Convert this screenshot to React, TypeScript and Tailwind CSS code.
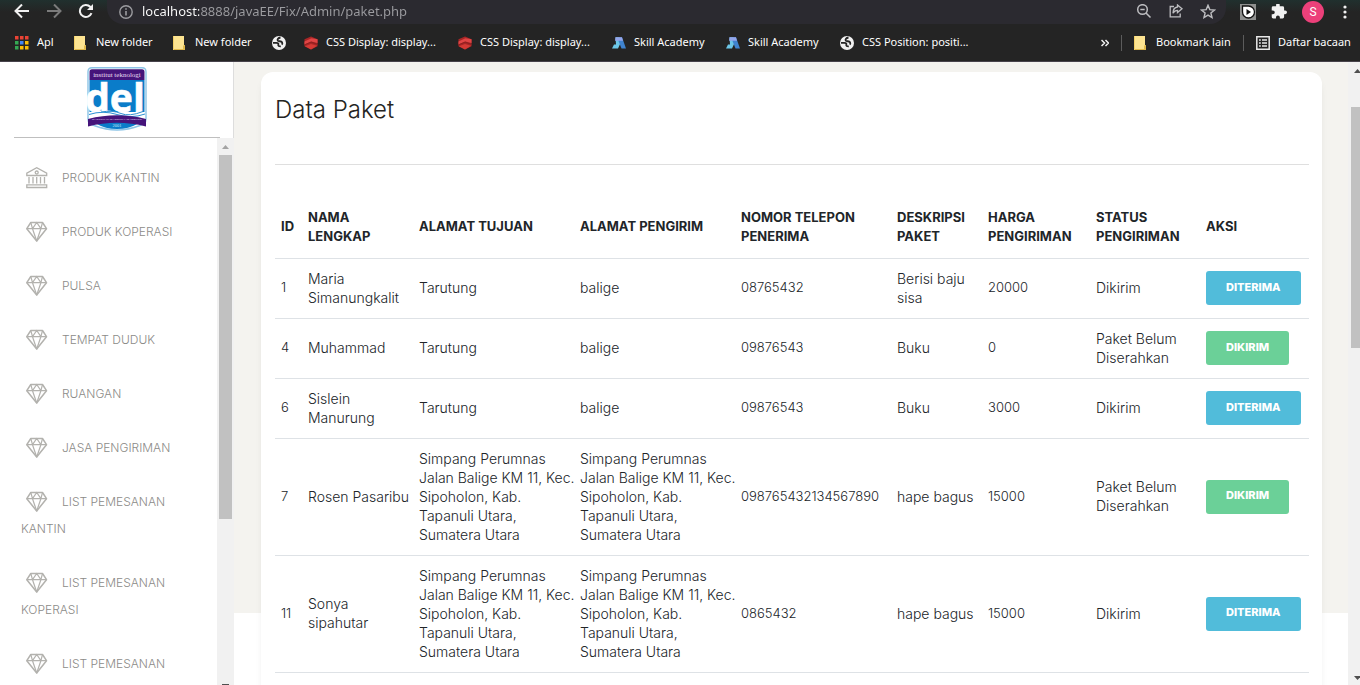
import type { ReactNode } from "react";

const uiFont = "font-['Noto_Sans',sans-serif]";

function FolderIcon() {
  return (
    <svg width="14" height="14" viewBox="0 0 14 14" className="shrink-0">
      <path d="M0 0h11v14H0z" fill="#fde491" />
      <path d="M0 13h11v1H0zM11 9h1v5h-2v-4z" fill="#e0b94b" />
      <path d="M0 0h1v14H0z" fill="#f3d067" />
    </svg>
  );
}

function GlobeIcon() {
  return (
    <svg width="14" height="14" viewBox="0 0 14 14" className="shrink-0">
      <circle cx="7" cy="7" r="7" fill="#f1f1f1" />
      <path
        d="M8.500 1.500C6 2 5 3.500 5.800 4.600c.8 1 3.400.3 4.200 1.600.5 1-.3 1.600.8 2.300M1 6.800h3.500c1.500 0 2.200 1 1.800 2-.3 1 .6 1.600 2.500 1.500"
        fill="none"
        stroke="#242424"
        strokeWidth="1.800"
      />
    </svg>
  );
}

function CubeIcon() {
  return (
    <svg width="14" height="14" viewBox="0 0 15 14" className="shrink-0">
      <path d="M7.500 0 14.500 3v7.500l-7 3.500-7-3.500V3z" fill="#a82626" />
      <path d="M.5 5.500 8 2l6.500 1v4L8 5.500.5 8.500z" fill="#e04545" />
      <path d="M.5 9 7.500 6l7 2.500" fill="none" stroke="#8c1f1f" />
      <path d="M1 10.500 7.500 8l6.500 2-6.500 4z" fill="#d43a35" />
    </svg>
  );
}

function SkillIcon() {
  return (
    <svg width="14" height="14" viewBox="0 0 14 14" className="shrink-0">
      <path d="M3.500 1.200h4L9 6 6 12.500H0L2 8.500h2z" fill="#6cc7e8" />
      <path d="M7 1.200h3L14 12.500H9.500L6.500 5z" fill="#3f83cf" />
      <path d="M3.500 1.200H10l1 3.500H3z" fill="#93a5ea" />
    </svg>
  );
}

function AppsIcon() {
  const colors = [
    "#ea4335", "#ea4335", "#ea4335",
    "#34a853", "#4285f4", "#fbbc05",
    "#34a853", "#fbbc05", "#fbbc05",
  ];
  return (
    <svg width="14" height="14" viewBox="0 0 14 14" className="shrink-0">
      {colors.map((c, i) => (
        <rect key={i} x={(i % 3) * 5} y={Math.floor(i / 3) * 5} width="3.500" height="3.500" fill={c} />
      ))}
    </svg>
  );
}

function ListIcon() {
  return (
    <svg width="14" height="14" viewBox="0 0 14 14" className="shrink-0" fill="none" stroke="#e8e8e8">
      <path d="M.8.8h12.400v12.400H.8z" strokeWidth="1.500" />
      <path d="M3 4h1.800M3 7h1.800M3 10h1.800M6 4h5M6 7h5M6 10h5" strokeWidth="1.600" />
    </svg>
  );
}

function Bookmark({ icon, label, width }: { icon: ReactNode; label?: string; width?: string }) {
  return (
    <a href="#" aria-label={label ?? "Situs"} className="flex shrink-0 items-center gap-2 whitespace-nowrap">
      {icon}
      {label && <span className={width}>{label}</span>}
    </a>
  );
}

function BrowserChrome() {
  return (
    <header className={`${uiFont} shrink-0 border-b border-[#47434b] bg-[#242424] text-white`}>
      <div className="flex h-6 items-center overflow-hidden bg-linear-to-b from-[#20302e] to-[#242424] to-50%">
        <div className="flex w-[107px] shrink-0 items-center gap-4 pl-[14px]">
          <button aria-label="Kembali">
            <svg width="16" height="16" viewBox="0 0 16 16" fill="none" stroke="#f1f1f1" strokeWidth="2" className="block">
              <path d="M15 7H2M8 .5 1.500 7 8 13.500" />
            </svg>
          </button>
          <button aria-label="Maju">
            <svg width="16" height="16" viewBox="0 0 16 16" fill="none" stroke="#7b7b7b" strokeWidth="2" className="block">
              <path d="M1 7h13M8 .5 14.500 7 8 13.500" />
            </svg>
          </button>
          <button aria-label="Muat ulang">
            <svg width="16" height="16" viewBox="0 0 16 16" fill="none" stroke="#f1f1f1" strokeWidth="2" className="block">
              <path d="M13.500 9.200A6 6 0 1 1 12.200 2.800L14 4.500" />
              <path d="M15 0v6H9z" fill="#f1f1f1" stroke="none" />
            </svg>
          </button>
        </div>
        <div className="flex h-6 min-w-0 flex-1 items-center rounded-b-2xl bg-[#2b2a30] pr-[10px] pl-3">
          <svg width="14" height="14" viewBox="0 0 14 14" fill="none" stroke="#9c9ca0" strokeWidth="1.400" className="shrink-0">
            <circle cx="7" cy="7" r="6.200" />
            <path d="M7 6v4.500M7 3.300v1.500" strokeWidth="1.600" />
          </svg>
          <input
            aria-label="Alamat"
            defaultValue="localhost:8888/javaEE/Fix/Admin/paket.php"
            className="ml-[9px] h-6 min-w-0 flex-1 bg-linear-to-r from-white from-[57px] to-[#9c9ca0] to-[57px] bg-clip-text pb-[2px] text-[13px] text-transparent outline-none"
          />
          <div className="flex items-center gap-4">
            <button aria-label="Zoom">
              <svg width="16" height="16" viewBox="0 0 16 16" fill="none" stroke="#bdbdc0" strokeWidth="1.500" className="block">
                <circle cx="6.500" cy="5.500" r="4.800" />
                <path d="m10 9 4.500 4.500M4.300 5.500h4.400" />
              </svg>
            </button>
            <button aria-label="Bagikan">
              <svg width="16" height="16" viewBox="0 0 16 16" fill="none" stroke="#bdbdc0" strokeWidth="1.300" className="block">
                <path d="M6 2.500H2.200v10.300h10V9.500" />
                <path d="M9.500 1 14 4.800 9.500 8.500V6.300C7.500 6.300 6 7.300 5 9.200c0-3.200 1.500-5.800 4.500-6.200z" />
              </svg>
            </button>
            <button aria-label="Tandai">
              <svg width="16" height="16" viewBox="0 0 16 16" fill="none" stroke="#bdbdc0" strokeWidth="1.400" className="block">
                <path d="m8 1.300 1.800 4.300 4.700.4-3.600 3 1.100 4.600L8 11.100l-4 2.500L5.100 9 1.500 6l4.700-.4z" />
              </svg>
            </button>
          </div>
        </div>
        <div className="flex shrink-0 items-center gap-[15px] pr-[7px] pl-[14px]">
          <button aria-label="Pemutar">
            <svg width="16" height="16" viewBox="0 0 16 16" className="block">
              <path d="M0 0h16v16H0z" fill="#8f908f" />
              <path d="M2.500 2h6a6 6 0 1 1-6 6z" fill="#fff" stroke="#111" strokeWidth="1.300" />
              <path d="m6.500 5 4.500 3-4.500 3z" fill="#111" />
            </svg>
          </button>
          <button aria-label="Ekstensi">
            <svg width="16" height="16" viewBox="1 2 22 22" fill="#f1f1f1" className="block">
              <path d="M20.500 11H19V7a2 2 0 0 0-2-2h-4V3.500a2.500 2.500 0 0 0-5 0V5H4a2 2 0 0 0-2 2v3.800h1.500a2.700 2.700 0 0 1 0 5.400H2V20a2 2 0 0 0 2 2h3.800v-1.500a2.700 2.700 0 0 1 5.400 0V22H17a2 2 0 0 0 2-2v-4h1.500a2.500 2.500 0 0 0 0-5z" />
            </svg>
          </button>
          <button aria-label="Profil" className="flex size-[22px] items-center justify-center rounded-full bg-[#ec407a] font-[Roboto,sans-serif] text-xs">
            S
          </button>
          <button aria-label="Menu">
            <svg width="14" height="14" viewBox="0 0 14 14" fill="#f1f1f1" className="block">
              <circle cx="6" cy="2" r="1.600" />
              <circle cx="6" cy="7" r="1.600" />
              <circle cx="6" cy="12" r="1.600" />
            </svg>
          </button>
        </div>
      </div>
      <nav aria-label="Bookmark" className="flex h-[37px] items-center gap-[18px] pr-2 pl-[15px] text-[11px]">
        <Bookmark icon={<AppsIcon />} label="Apl" width="w-[19px]" />
        <Bookmark icon={<FolderIcon />} label="New folder" width="w-[59px]" />
        <Bookmark icon={<FolderIcon />} label="New folder" width="w-[59px]" />
        <Bookmark icon={<GlobeIcon />} />
        <Bookmark icon={<CubeIcon />} label="CSS Display: display..." width="w-[114px]" />
        <Bookmark icon={<CubeIcon />} label="CSS Display: display..." width="w-[114px]" />
        <Bookmark icon={<SkillIcon />} label="Skill Academy" width="w-[74px]" />
        <Bookmark icon={<SkillIcon />} label="Skill Academy" width="w-[74px]" />
        <Bookmark icon={<GlobeIcon />} label="CSS Position: positi..." />
        <div className="ml-auto flex items-center gap-3">
          <button aria-label="Bookmark lainnya">
            <svg width="8" height="8" viewBox="0 0 8 8" fill="none" stroke="#f1f1f1" strokeWidth="1.500">
              <path d="m.5 1 3 3-3 3M4.500 1l3 3-3 3" />
            </svg>
          </button>
          <span className="h-4 w-px bg-[#5c5c5c]" />
          <Bookmark icon={<FolderIcon />} label="Bookmark lain" width="w-[75px]" />
          <span className="h-4 w-px bg-[#5c5c5c]" />
          <Bookmark icon={<ListIcon />} label="Daftar bacaan" width="w-[74px]" />
        </div>
      </nav>
    </header>
  );
}

function DelLogo() {
  return (
    <svg width="60" height="64" viewBox="0 0 60 64" role="img" aria-label="Institut Teknologi Del">
      <path d="M5 .7h50q4 0 4 4V52q0 5-6 6.500-12 4.500-23 4.500T7 58.500Q1 57 1 52V4.700q0-4 4-4z" fill="#fff" stroke="#8cc4e6" strokeWidth="1.400" />
      <path d="M2.500 13h55v32h-55z" fill="#0a7cc9" />
      <path d="M5 2.200h50q2.500 0 2.500 2.500V13h-55V4.700q0-2.500 2.500-2.500z" fill="#45147a" />
      <text x="30" y="10" textAnchor="middle" fill="#e9dff2" fontFamily="Liberation Serif, serif" fontSize="7">
        institut teknologi
      </text>
      <text x="28" y="45" textAnchor="middle" fill="#fff" stroke="#fff" strokeWidth=".6" fontFamily="Open Sans, sans-serif" fontWeight="700" fontSize="39">
        del
      </text>
      <path d="M2 46q14-5 28-.5T58 45v7H2z" fill="#fff" />
      <path d="M2 47.500q14-4.500 28 0t28-.5M14 45q12-2 20 1.500t22-2" fill="none" stroke="#2c90d2" />
      <path d="M10 57q20-5 40 0-8 5-20 5t-20-5z" fill="#0a7cc9" />
      <path d="M1 52q29-7.500 58 0v7.500q-29-7.500-58 0z" fill="#45147a" />
      <text x="30" y="53.300" textAnchor="middle" fill="#cdbbe0" fontFamily="Liberation Serif, serif" fontWeight="700" fontSize="2.900">
        MARTUHAN-MARROHA-MARBISUK
      </text>
      <text x="30" y="60" textAnchor="middle" fill="#cfe6f6" fontFamily="Liberation Serif, serif" fontSize="4.500">
        2001
      </text>
    </svg>
  );
}

function BankIcon() {
  return (
    <svg width="22" height="22" viewBox="0 0 22 22" fill="none" stroke="#b3b2ae" strokeWidth="1.300" className="block">
      <path d="M.8 8.500V6.200L10.700.8l10 5.400v2.300z" />
      <circle cx="10.700" cy="5.500" r="1.500" />
      <path d="M.8 17.800h19.900v2.700H.8zM3 10v6.500M7 10v6.500M10.700 10v6.500M14.500 10v6.500M18.500 10v6.500" />
    </svg>
  );
}

function DiamondIcon() {
  return (
    <svg width="22" height="22" viewBox="0 0 22 22" fill="none" stroke="#b3b2ae" strokeWidth="1.500" strokeLinejoin="round" className="block">
      <path d="M4.800 1.500h11.700l4 6.200-9.800 12.300L.8 7.700z" />
      <path d="M.8 7.700h19.700M6.500 7.700l4.200 12.300 4.200-12.300M4.800 1.500l1.700 6.200 4.200-6.200 4.200 6.200 1.600-6.200" strokeWidth="1.200" />
    </svg>
  );
}

const menu = [
  "Produk Kantin",
  "Produk Koperasi",
  "Pulsa",
  "Tempat Duduk",
  "Ruangan",
  "Jasa Pengiriman",
  "List Pemesanan Kantin",
  "List Pemesanan Koperasi",
  "List Pemesanan",
];

function Sidebar() {
  return (
    <aside className="flex w-[234px] shrink-0 flex-col">
      <div className="border-r border-[#dddddd] pr-[13px] pl-[14px]">
        <div className="flex h-[76px] justify-center border-b border-[#bfbfbf] pt-[5px]">
          <DelLogo />
        </div>
      </div>
      <div className="flex min-h-0 flex-1">
        <nav aria-label="Menu utama" className="min-w-0 flex-1 overflow-hidden pt-[26px] pr-5 pl-[21px]">
          {menu.map((item, i) => (
            <a key={item} href="#" className="mb-[27px] block text-xs leading-[27px] font-light text-[#8c8b88] uppercase">
              <span className="mr-[14px] ml-[5px] inline-block pt-[3px] align-top">
                {i === 0 ? <BankIcon /> : <DiamondIcon />}
              </span>
              {item}
            </a>
          ))}
        </nav>
        <div aria-hidden="true" className="flex w-[17px] flex-col items-center bg-[#f1f1f1]">
          <svg width="7" height="17" viewBox="0 0 7 17" fill="#a3a3a3">
            <path d="M0 11h7L3.500 7z" />
          </svg>
          <div className="h-[364px] w-[13px] bg-[#c1c1c1]" />
          <div className="mt-auto h-px w-[7px] bg-[#505050]" />
        </div>
      </div>
    </aside>
  );
}

const columns = [
  { title: "ID", width: "w-[27px]" },
  { title: "Nama Lengkap", width: "w-[111px]" },
  { title: "Alamat Tujuan", width: "w-[161px]" },
  { title: "Alamat Pengirim", width: "w-[161px]" },
  { title: "Nomor Telepon Penerima", width: "w-[156px]" },
  { title: "Deskripsi Paket", width: "w-[91px]" },
  { title: "Harga Pengiriman", width: "w-[108px]" },
  { title: "Status Pengiriman", width: "w-[110px]" },
  { title: "Aksi", width: "w-[109px]" },
];

const address = [
  "Simpang Perumnas",
  "Jalan Balige KM 11, Kec.",
  "Sipoholon, Kab.",
  "Tapanuli Utara,",
  "Sumatera Utara",
].join("\n");

const rows = [
  ["1", "Maria\nSimanungkalit", "Tarutung", "balige", "08765432", "Berisi baju\nsisa", "20000", "Dikirim"],
  ["4", "Muhammad", "Tarutung", "balige", "09876543", "Buku", "0", "Paket Belum\nDiserahkan"],
  ["6", "Sislein\nManurung", "Tarutung", "balige", "09876543", "Buku", "3000", "Dikirim"],
  ["7", "Rosen Pasaribu", address, address, "098765432134567890", "hape bagus", "15000", "Paket Belum\nDiserahkan"],
  ["11", "Sonya\nsipahutar", address, address, "0865432", "hape bagus", "15000", "Dikirim"],
];

function PackageTable() {
  return (
    <table className="w-full table-fixed border-b border-[#dee2e6] text-left leading-[19px] font-light text-[#212529]">
      <thead>
        <tr className="h-[62px]">
          {columns.map((c) => (
            <th key={c.title} scope="col" className={`${c.width} pl-[6px] text-[13px] font-bold uppercase`}>
              {c.title}
            </th>
          ))}
        </tr>
      </thead>
      <tbody>
        {rows.map((row) => {
          const delivered = row[7] === "Dikirim";
          return (
            <tr key={row[0]} className="h-[60px] border-t border-[#dee2e6]">
              {row.map((cell, i) => (
                <td
                  key={i}
                  className={`pt-[10px] pb-[11px] pl-[6px] whitespace-pre ${/^\d+$/.test(cell) ? "text-[13px]" : "text-[14px]"}`}
                >
                  {cell}
                </td>
              ))}
              <td className="pl-[6px]">
                <button
                  className={`block h-[34px] rounded-[3px] px-5 pb-[2px] text-[11px] font-extrabold text-white ${delivered ? "bg-[#51bcda]" : "bg-[#6bd098]"}`}
                >
                  {delivered ? "DITERIMA" : "DIKIRIM"}
                </button>
              </td>
            </tr>
          );
        })}
      </tbody>
    </table>
  );
}

export default function App() {
  return (
    <div className="flex h-screen flex-col overflow-hidden bg-white font-[Inter,sans-serif]">
      <BrowserChrome />
      <div className="flex min-h-0 flex-1">
        <Sidebar />
        <main className="min-w-0 flex-1 overflow-hidden">
          <div className="h-[551px] bg-[#f4f3ef] pt-[10px] pr-[26px] pl-[27px]">
            <section className="rounded-xl bg-white pt-[23px] pr-[13px] pb-8 pl-[14px] shadow-[0_6px_10px_-4px_rgba(0,0,0,0.15)]">
              <h1 className="text-2xl leading-[30px] font-light text-[#252422]">Data Paket</h1>
              <hr className="mt-[39px] mb-[31px] border-[#dfdfdf]" />
              <PackageTable />
            </section>
          </div>
        </main>
        <div aria-hidden="true" className="flex w-3 shrink-0 flex-col items-end overflow-hidden bg-[#f1f1f1]">
          <svg width="6" height="45" viewBox="0 0 6 45" fill="#505050">
            <path d="M0 11h7L3.500 7z" />
          </svg>
          <div className="h-[241px] w-[9px] bg-[#c1c1c1]" />
          <svg width="6" height="12" viewBox="0 0 6 12" fill="#505050" className="mt-auto">
            <path d="M0 3h7L3.500 7z" />
          </svg>
        </div>
      </div>
    </div>
  );
}
